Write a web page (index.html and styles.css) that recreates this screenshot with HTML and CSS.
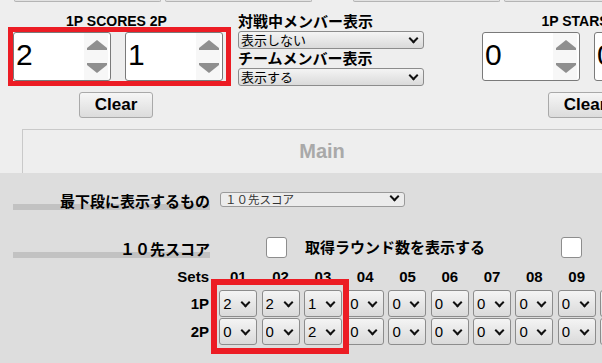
FILE: index.html
```html
<!DOCTYPE html>
<html lang="ja">
<head>
  <meta charset="UTF-8" />
  <meta name="viewport" content="width=device-width, initial-scale=1.0"/>
  <title>Score Control</title>
  <link rel="stylesheet" href="styles.css">
</head>
<body>

  <!-- buttons scrolled out above -->
  <div class="stubs">
    <span class="stub"></span>
    <span class="stub"></span>
    <span class="stub stub-far"></span>
    <span class="stub"></span>
  </div>

  <div class="top">
    <!-- Scores -->
    <div class="counter">
      <div class="counter-title">1P SCORES 2P</div>
      <div class="counter-pair marked">
        <div class="num">
          <span class="num-val">2</span>
          <svg class="spin" width="24" height="47" viewBox="0 0 24 47">
            <path d="M3 15 L13 7 L23 15 L23 17 L3 17 Z" fill="#8f8f8f"/>
            <path d="M3 30 L23 30 L23 32 L13 40 L3 32 Z" fill="#8f8f8f"/>
          </svg>
        </div>
        <div class="num">
          <span class="num-val">1</span>
          <svg class="spin" width="24" height="47" viewBox="0 0 24 47">
            <path d="M3 15 L13 7 L23 15 L23 17 L3 17 Z" fill="#8f8f8f"/>
            <path d="M3 30 L23 30 L23 32 L13 40 L3 32 Z" fill="#8f8f8f"/>
          </svg>
        </div>
      </div>
      <button class="clear">Clear</button>
    </div>

    <!-- Member display -->
    <div class="members">
      <div class="members-label">対戦中メンバー表示</div>
      <span class="sel sel-wide"><select><option>表示しない</option><option>表示する</option></select></span>
      <div class="members-label">チームメンバー表示</div>
      <span class="sel sel-wide"><select><option>表示する</option><option>表示しない</option></select></span>
    </div>

    <!-- Stars -->
    <div class="counter counter-plain">
      <div class="counter-title">1P STARS 2P</div>
      <div class="counter-pair">
        <div class="num">
          <span class="num-val">0</span>
          <svg class="spin" width="24" height="47" viewBox="0 0 24 47">
            <path d="M3 15 L13 7 L23 15 L23 17 L3 17 Z" fill="#8f8f8f"/>
            <path d="M3 30 L23 30 L23 32 L13 40 L3 32 Z" fill="#8f8f8f"/>
          </svg>
        </div>
        <div class="num">
          <span class="num-val">0</span>
          <svg class="spin" width="24" height="47" viewBox="0 0 24 47">
            <path d="M3 15 L13 7 L23 15 L23 17 L3 17 Z" fill="#8f8f8f"/>
            <path d="M3 30 L23 30 L23 32 L13 40 L3 32 Z" fill="#8f8f8f"/>
          </svg>
        </div>
      </div>
      <button class="clear">Clear</button>
    </div>
  </div>

  <!-- Tabs -->
  <div class="tabs">
    <div class="tab">Main</div>
  </div>

  <div class="panel">
    <div class="row row-bottom">
      <div class="row-label">最下段に表示するもの</div>
      <span class="sel sel-flat"><select><option>１０先スコア</option></select></span>
    </div>

    <div class="row row-score">
      <div class="row-label">１０先スコア</div>
      <input type="checkbox" class="check">
      <span class="check-text">取得ラウンド数を表示する</span>
      <input type="checkbox" class="check check-end">
    </div>

    <div class="sets">
      <div class="sets-grid">
        <div class="sets-head">Sets</div>
        <div class="set-no">01</div>
        <div class="set-no">02</div>
        <div class="set-no">03</div>
        <div class="set-no">04</div>
        <div class="set-no">05</div>
        <div class="set-no">06</div>
        <div class="set-no">07</div>
        <div class="set-no">08</div>
        <div class="set-no">09</div>
        <div class="set-no">10</div>

        <div class="sets-player">1P</div>
        <span class="sel sel-set"><select><option>2</option></select></span>
        <span class="sel sel-set"><select><option>2</option></select></span>
        <span class="sel sel-set"><select><option>1</option></select></span>
        <span class="sel sel-set"><select><option>0</option></select></span>
        <span class="sel sel-set"><select><option>0</option></select></span>
        <span class="sel sel-set"><select><option>0</option></select></span>
        <span class="sel sel-set"><select><option>0</option></select></span>
        <span class="sel sel-set"><select><option>0</option></select></span>
        <span class="sel sel-set"><select><option>0</option></select></span>
        <span class="sel sel-set"><select><option>0</option></select></span>

        <div class="sets-player">2P</div>
        <span class="sel sel-set"><select><option>0</option></select></span>
        <span class="sel sel-set"><select><option>0</option></select></span>
        <span class="sel sel-set"><select><option>2</option></select></span>
        <span class="sel sel-set"><select><option>0</option></select></span>
        <span class="sel sel-set"><select><option>0</option></select></span>
        <span class="sel sel-set"><select><option>0</option></select></span>
        <span class="sel sel-set"><select><option>0</option></select></span>
        <span class="sel sel-set"><select><option>0</option></select></span>
        <span class="sel sel-set"><select><option>0</option></select></span>
        <span class="sel sel-set"><select><option>0</option></select></span>
      </div>
      <div class="sets-mark"></div>
    </div>
  </div>

</body>
</html>
```

FILE: styles.css
```css
* {
  box-sizing: border-box;
}

body, html {
  margin: 0;
  padding: 0;
  height: 100vh;
  overflow: hidden;
}

body {
  background: #eeeeee;
  font-family: 'Liberation Sans', 'Noto Sans CJK JP', sans-serif;
  color: #000;
  width: 602px;
}

/* bottoms of buttons scrolled above */
.stubs {
  display: flex;
  gap: 4px;
  padding-left: 14px;
  height: 2px;
}

.stub {
  flex: 0 0 147px;
  height: 2px;
  background: #e2e2e2;
  border: 1px solid #b4b4b4;
  border-top: none;
  border-radius: 0 0 3px 3px;
}

.stub-far {
  margin-left: 37px;
}

/* top controls */
.top {
  display: flex;
  align-items: flex-start;
  height: 127px;
  white-space: nowrap;
}

.counter {
  display: flex;
  flex-direction: column;
  margin-left: 8px;
  padding-top: 13px;
  flex: 0 0 auto;
}

.counter-plain {
  margin-left: 53px;
}

.counter-title {
  font-size: 14px;
  font-weight: bold;
  line-height: 12px;
  text-align: center;
  padding-right: 6px;
}

.counter-pair {
  display: flex;
  gap: 14px;
  padding-right: 3px;
  border: 5px solid transparent;
}

.marked {
  border-color: #ec1c24;
}

.num {
  width: 98px;
  height: 49px;
  background: #fff;
  border: 1px solid #7a7a7a;
  border-radius: 3px;
  display: flex;
  align-items: center;
  justify-content: space-between;
  padding-right: 2px;
}

.num-val {
  font-size: 30px;
  padding-left: 2px;
  padding-bottom: 3px;
}

.spin {
  background: #f7f7f7;
}

.clear {
  align-self: flex-start;
  margin-left: 71px;
  margin-top: 6px;
  width: 74px;
  height: 26px;
  padding: 0;
  font-family: 'Liberation Sans', sans-serif;
  font-size: 17px;
  font-weight: bold;
  color: #000;
  background: linear-gradient(#f6f6f6, #dcdcdc);
  border: 1px solid #a9a9a9;
  border-radius: 3px;
}

.members {
  display: flex;
  flex-direction: column;
  margin-left: 7px;
  padding-top: 10px;
  width: 186px;
  flex: 0 0 186px;
}

.members-label {
  font-family: 'Noto Sans CJK JP', sans-serif;
  font-size: 15px;
  font-weight: bold;
  line-height: 18px;
  height: 19px;
}

/* select boxes */
.sel {
  position: relative;
  display: block;
}

.sel select {
  appearance: none;
  -webkit-appearance: none;
  width: 100%;
  height: 100%;
  margin: 0;
  color: #000;
  border: 1px solid #8c8c8c;
  border-radius: 3px;
  background: linear-gradient(#f4f4f4, #dadada);
  outline: none;
}

.sel::after {
  content: '';
  position: absolute;
  right: 8px;
  top: 50%;
  width: 5px;
  height: 5px;
  margin-top: -5px;
  border-right: 2.5px solid #111;
  border-bottom: 2.5px solid #111;
  transform: rotate(45deg);
  pointer-events: none;
}

.sel-wide {
  height: 18px;
}

.sel-wide select {
  font-family: 'Noto Sans CJK JP', sans-serif;
  font-size: 13px;
  padding: 0 0 0 2px;
  line-height: 16px;
}

.sel-wide::after {
  right: 7px;
  margin-top: -5px;
}

/* tabs */
.tabs {
  margin-left: 22px;
  border-top: 1px solid #c9c9c9;
  border-left: 1px solid #c9c9c9;
  height: 44px;
}

.tab {
  width: 598px;
  text-align: center;
  line-height: 42px;
  font-size: 20px;
  font-weight: bold;
  color: #a9a9a9;
}

/* main panel */
.panel {
  background: #dddddd;
  height: 200px;
  padding-top: 17px;
}

.row {
  display: flex;
  padding-left: 13px;
  padding-right: 20px;
}

.row-label {
  width: 197px;
  flex: 0 0 197px;
  text-align: right;
  font-family: 'Noto Sans CJK JP', sans-serif;
  font-size: 15px;
  font-weight: bold;
  line-height: 18px;
  background: linear-gradient(transparent 12px, #c2c2c2 12px);
  align-self: flex-end;
}

.row-bottom {
  height: 20px;
}

.sel-flat {
  margin-left: 10px;
  width: 185px;
  height: 15px;
}

.sel-flat select {
  font-family: 'Noto Sans CJK JP', sans-serif;
  font-size: 11.5px;
  line-height: 13px;
  padding: 0 0 0 4px;
  color: #333;
  background: #ececec;
  border-color: #9a9a9a;
}

.sel-flat::after {
  right: 7px;
  margin-top: -5px;
}

.row-score {
  margin-top: 26px;
  height: 22px;
  align-items: center;
}

.check {
  appearance: none;
  -webkit-appearance: none;
  margin: 0 0 0 56px;
  width: 21px;
  height: 21px;
  background: #fff;
  border: 1px solid #8d8d8d;
  border-radius: 3px;
  flex: 0 0 auto;
}

.check-end {
  margin-left: auto;
}

.check-text {
  margin-left: 18px;
  font-family: 'Noto Sans CJK JP', sans-serif;
  font-size: 15px;
  font-weight: bold;
  line-height: 18px;
}

/* set scores */
.sets {
  position: relative;
  margin-top: 10px;
  padding-left: 13px;
}

.sets-grid {
  display: grid;
  grid-template-columns: 202px repeat(10, 38px);
  grid-template-rows: 21px 27px 27px;
  column-gap: 4.3px;
  row-gap: 1px;
}

.sets-head, .set-no, .sets-player {
  font-size: 15px;
  font-weight: bold;
  line-height: 17px;
}

.sets-head, .sets-player {
  text-align: right;
  padding-right: 6px;
}

.set-no {
  text-align: center;
}

.sets-player {
  line-height: 27px;
}

.sel-set select {
  font-family: 'Liberation Sans', sans-serif;
  font-size: 15px;
  padding: 0 0 0 3px;
}

.sel-set::after {
  right: 8px;
  margin-top: -5px;
}

.sets-mark {
  position: absolute;
  left: 211px;
  top: 11px;
  width: 138px;
  height: 75px;
  border: 6px solid #ec1c24;
}
```
